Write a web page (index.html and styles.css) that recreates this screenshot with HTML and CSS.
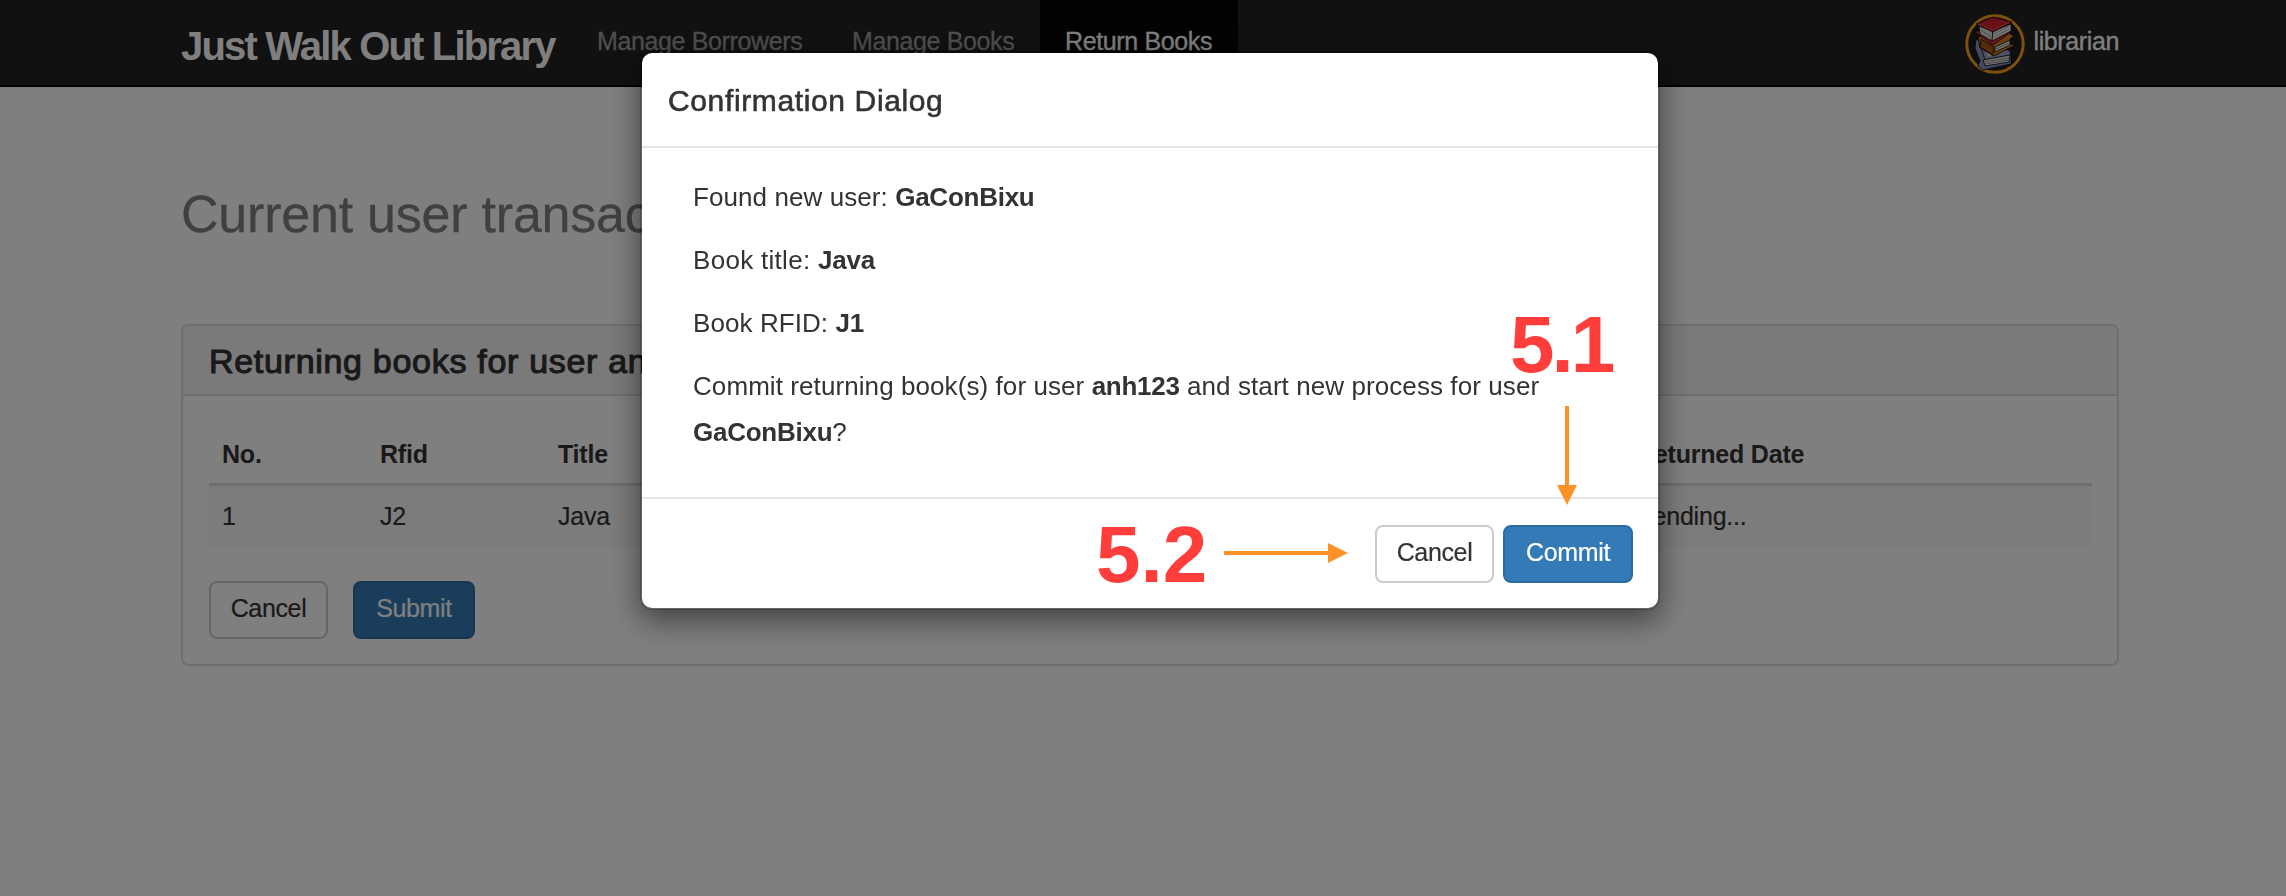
FILE: index.html
```html
<!DOCTYPE html>
<html lang="en">
<head>
<meta charset="utf-8">
<title>Just Walk Out Library</title>
<link rel="stylesheet" href="styles.css">
</head>
<body>
<header class="navbar">
  <span class="brand">Just Walk Out Library</span>
  <nav class="nav">
    <a class="nav-link">Manage Borrowers</a>
    <a class="nav-link books">Manage Books</a>
    <a class="nav-link active">Return Books</a>
  </nav>
  <div class="account">
    <svg class="avatar" viewBox="0 0 60 60" width="60" height="60">
      <circle cx="30" cy="30" r="28.2" fill="#1c1c1c" stroke="#fca11f" stroke-width="3"/>
      <g stroke="#080808" stroke-width=".8" stroke-linejoin="round">
        <path d="M11 25 15 27 19 40 46 36 46 50 18 56 13 52 15 47 10 34Z" fill="#8492c4"/>
        <path d="M14 27 22 34 44 36 46 41 20 46Z" fill="#97a2cf"/>
        <path d="M18 46 45 41 44 48 20 52Z" fill="#e4e4e4"/>
        <path d="M19 48 44 44M20 50 44 46" fill="none" stroke="#777"/>
        <path d="M21 37 25 36 27 41 23 42Z" fill="#f0e7bd" stroke="none"/>
        <path d="M13 23 38 16 49 22 45 25 45 30 50 31 29 42 15 34Z" fill="#d97c20"/>
        <path d="M16 25 29 33 28 41 15 33Z" fill="#ad571c"/>
        <path d="M30 33 45 26 45 31 30 38Z" fill="#e4e4e4"/>
        <path d="M31 35 44 29" fill="none" stroke="#777"/>
        <path d="M10 18 15 16 27 26 44 16 46 18 28 31Z" fill="#d52d40"/>
        <path d="M14 12 28 17 27 27 15 20Z" fill="#dedede"/>
        <path d="M28 17 46 10 46 17 27 27Z" fill="#f2f2f2"/>
        <path d="M29 20 44 12M29 23 44 15M16 16 26 23" fill="none" stroke="#888"/>
        <path d="M11 10 28 3 47 8 28 18Z" fill="#d31e2e"/>
        <path d="M13 10 28 16 45 8" fill="none" stroke="#f06b70"/>
      </g>
    </svg>
    <span class="account-name">librarian</span>
  </div>
</header>
<main class="page">
  <h1 class="page-title">Current user transactions</h1>
  <section class="panel">
    <h3 class="panel-heading">Returning books for user anh123</h3>
    <div class="panel-body">
      <table class="table">
        <thead><tr><th class="col-no">No.</th><th class="col-rfid">Rfid</th><th class="col-title">Title</th><th class="col-date">Returned Date</th></tr></thead>
        <tbody><tr><td>1</td><td>J2</td><td class="col-title">Java</td><td>Pending...</td></tr></tbody>
      </table>
      <div class="actions">
        <button class="btn btn-default">Cancel</button>
        <button class="btn btn-primary btn-submit">Submit</button>
      </div>
    </div>
  </section>
</main>
<div class="backdrop">
  <div class="modal">
    <h4 class="modal-header">Confirmation Dialog</h4>
    <div class="modal-body">
      <p>Found new user: <b>GaConBixu</b></p>
      <p class="book-title">Book title: <b>Java</b></p>
      <p>Book RFID: <b>J1</b></p>
      <p>Commit returning book(s) for user <b>anh123</b> and start new process for user <b>GaConBixu</b>?</p>
    </div>
    <div class="modal-footer">
      <button class="btn btn-default">Cancel</button>
      <button class="btn btn-primary btn-commit">Commit</button>
    </div>
  </div>
</div>
<span class="note note-commit">5.1</span>
<span class="note note-cancel">5.2</span>
<svg class="arrow arrow-down" width="20" height="99" viewBox="0 0 20 99"><path d="M8 0h4v79h8L10 99 0 79h8z"/></svg>
<svg class="arrow arrow-right" width="124" height="20" viewBox="0 0 124 20"><path d="M0 8h104V0l20 10-20 10v-8H0z"/></svg>
</body>
</html>
```
FILE: styles.css
```css
* { box-sizing: border-box; }
body {
  margin: 0;
  height: 896px;
  overflow: hidden;
  background: #fff;
  color: #333;
  font-family: "Liberation Sans", Arial, sans-serif;
  font-size: 25px;
}
h1, h3, h4, p { margin: 0; font-weight: normal; }

.navbar {
  display: flex;
  height: 87px;
  padding: 0 167px 0 181px;
  background: #222;
  border-bottom: 2px solid #020202;
}
.brand {
  width: 391px;
  padding-top: 22px;
  color: #fff;
  font-size: 40px;
  font-weight: bold;
  line-height: 48px;
  letter-spacing: -1.82px;
  white-space: nowrap;
}
.nav { display: flex; }
.nav-link {
  width: 255px;
  padding: 23px 0 0 25px;
  color: #9d9d9d;
  line-height: 36px;
  letter-spacing: -.37px;
  white-space: nowrap;
  -webkit-text-stroke: .3px;
}
.nav-link.books { width: 213px; }
.nav-link.active { width: 198px; background: #050505; color: #fff; }
.account { display: flex; gap: 8px; margin-left: auto; padding-top: 14px; color: #fff; }
.avatar { display: block; }
.account-name {
  padding-top: 9px;
  line-height: 36px;
  letter-spacing: -.38px;
  -webkit-text-stroke: .3px;
}

.page { padding: 98px 167px 0 181px; }
.page-title {
  height: 58px;
  color: #808080;
  font-size: 52px;
  line-height: 58px;
  letter-spacing: -.22px;
  -webkit-text-stroke: .3px;
}
.panel { margin-top: 81px; border: 2px solid #ddd; border-radius: 8px; }
.panel-heading {
  height: 70px;
  padding: 2px 26px 0;
  background: #f5f5f5;
  border-bottom: 2px solid #ddd;
  border-radius: 6px 6px 0 0;
  font-size: 34px;
  line-height: 66px;
  letter-spacing: .7px;
  -webkit-text-stroke: 1.1px #333;
}
.panel-body { padding: 29px 25px 25px 26px; }
.table { width: 100%; border-collapse: separate; border-spacing: 0; table-layout: fixed; text-align: left; }
.table th, .table td { padding: 0 0 0 13px; letter-spacing: -.2px; }
.table th { height: 61px; border-bottom: 3px solid #ddd; }
.table td { height: 61px; padding-bottom: 1px; background: #f9f9f9; -webkit-text-stroke: .2px; }
.col-no { width: 158px; }
.col-rfid { width: 178px; }
.col-date { width: 469px; }
.actions { display: flex; gap: 25px; margin-top: 34px; }

.btn {
  width: 119px;
  height: 58px;
  padding: 0 0 4px;
  border: 2px solid #ccc;
  border-radius: 8px;
  background: #fff;
  color: #333;
  font: 25px "Liberation Sans", Arial, sans-serif;
  letter-spacing: -.35px;
  -webkit-text-stroke: .2px;
}
.btn-primary { border-color: #2e6da4; background: #337ab7; color: #fff; }
.btn-submit { width: 122px; }
.btn-commit { width: 130px; }

.backdrop {
  position: fixed;
  inset: 0;
  padding-top: 51px;
  background: rgba(0, 0, 0, .5);
}
.modal {
  width: 1020px;
  height: 559px;
  margin-left: 640px;
  border: 2px solid rgba(0, 0, 0, .2);
  border-radius: 12px;
  background: #fff;
  background-clip: padding-box;
  box-shadow: 0 10px 30px rgba(0, 0, 0, .5);
}
.modal-header {
  height: 95px;
  padding: 1px 26px 0;
  border-bottom: 2px solid #e5e5e5;
  font-size: 30px;
  line-height: 94px;
  letter-spacing: .63px;
  -webkit-text-stroke: .6px #333;
}
.modal-body {
  display: flex;
  flex-direction: column;
  gap: 17px;
  height: 349px;
  padding: 26px 50px 26px 51px;
  font-size: 26px;
  line-height: 46px;
  letter-spacing: .08px;
}
.modal-body b { letter-spacing: -.25px; }
.book-title { letter-spacing: .3px; }
.modal-footer {
  display: flex;
  justify-content: flex-end;
  gap: 9px;
  padding: 26px 25px 0;
  border-top: 2px solid #e5e5e5;
}

/* Step annotations drawn over the dialog */
.note {
  position: absolute;
  color: #ff3e3b;
  font-size: 80px;
  font-weight: bold;
  line-height: 90px;
}
.note-commit { left: 1510px; top: 300px; letter-spacing: -3px; }
.note-cancel { left: 1096px; top: 510px; }
.arrow { position: absolute; fill: #ff9226; }
.arrow-down { left: 1557px; top: 406px; }
.arrow-right { left: 1224px; top: 543px; }
```
